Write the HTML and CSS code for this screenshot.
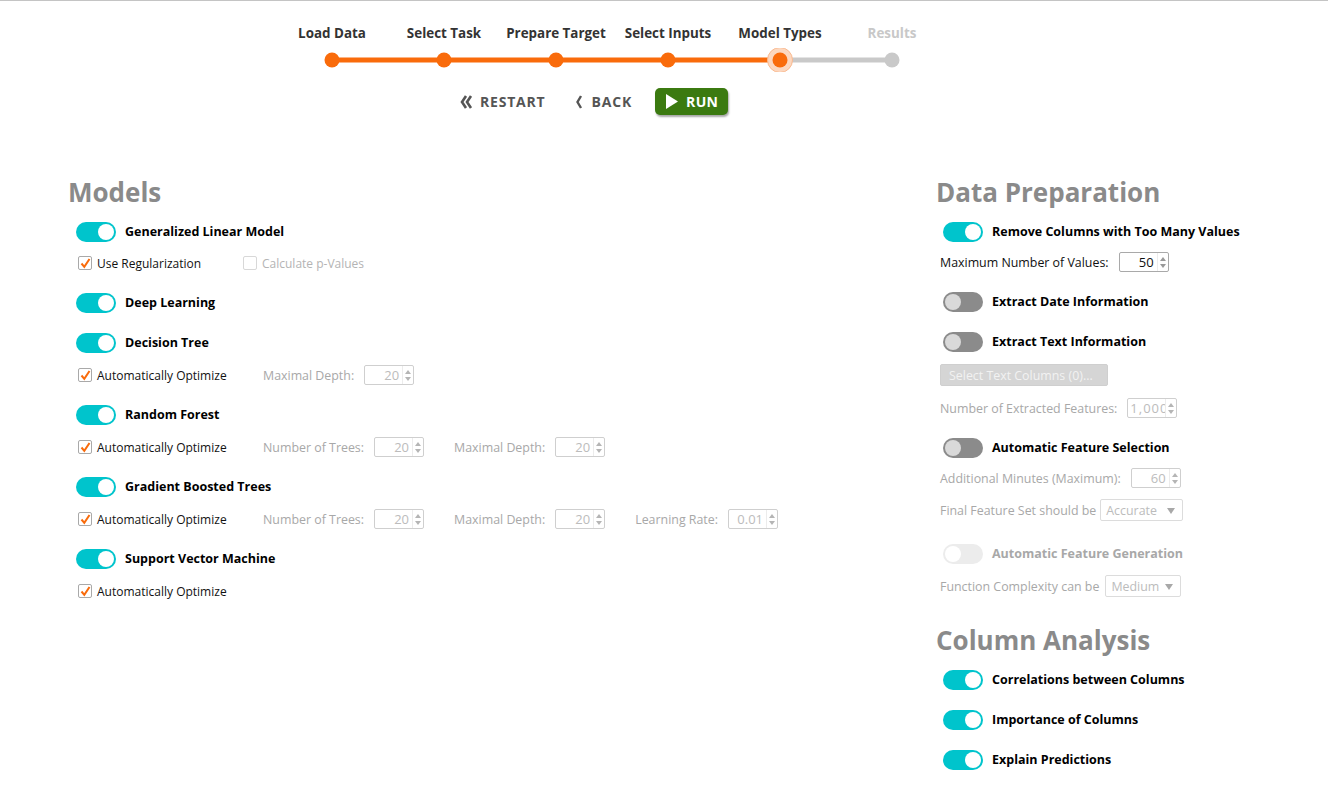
FILE: index.html
```html
<!DOCTYPE html>
<html lang="en">
<head>
<meta charset="utf-8">
<title>Model Types</title>
<link rel="stylesheet" href="styles.css">
</head>
<body>
<header class="wizard">
  <div class="steps">
    <span class="step">Load Data</span>
    <span class="step">Select Task</span>
    <span class="step">Prepare Target</span>
    <span class="step">Select Inputs</span>
    <span class="step">Model Types</span>
    <span class="step step-future">Results</span>
  </div>
  <svg class="track" width="672" height="24" viewBox="0 0 672 24">
    <line x1="504" y1="12" x2="616" y2="12" stroke="#c9c9c9" stroke-width="5"/>
    <line x1="56" y1="12" x2="504" y2="12" stroke="#f96b0b" stroke-width="5"/>
    <circle cx="56" cy="12" r="7.5" fill="#f96b0b"/>
    <circle cx="168" cy="12" r="7.5" fill="#f96b0b"/>
    <circle cx="280" cy="12" r="7.5" fill="#f96b0b"/>
    <circle cx="392" cy="12" r="7.5" fill="#f96b0b"/>
    <circle cx="504" cy="12" r="12.5" fill="#fcd7bf" stroke="#f9b98f" stroke-width="1"/>
    <circle cx="504" cy="12" r="7.5" fill="#f96b0b"/>
    <circle cx="616" cy="12" r="7.5" fill="#c9c9c9"/>
  </svg>
  <div class="actions">
    <button class="action action-restart">
      <svg width="13" height="16" viewBox="0 0 13 16"><path d="M6 2 L2 8 L6 14 M11 2 L7 8 L11 14" fill="none" stroke="#555" stroke-width="2.6" stroke-linejoin="miter"/></svg>
      RESTART
    </button>
    <button class="action action-back">
      <svg width="8" height="16" viewBox="0 0 8 16"><path d="M6 2 L2.5 8 L6 14" fill="none" stroke="#555" stroke-width="2.4"/></svg>
      BACK
    </button>
    <button class="run">
      <svg width="14" height="17" viewBox="0 0 14 17"><path d="M1 1 L13 8.5 L1 16 Z" fill="#fff"/></svg>
      RUN
    </button>
  </div>
</header>

<main class="content">
  <section class="models">
    <h2 class="section-title">Models</h2>
    <div class="model-list">
      <div class="group group-first">
        <div class="toggle-row"><span class="toggle on"></span><span class="toggle-label">Generalized Linear Model</span></div>
        <div class="options">
          <label class="check-item narrow"><span class="checkbox checked"><svg width="11" height="11" viewBox="0 0 11 11"><path d="M1.5 5.5 L4.3 8.8 L9.5 1" fill="none" stroke="#f96b0b" stroke-width="2"/></svg></span>Use Regularization</label>
          <label class="check-item disabled"><span class="checkbox"></span>Calculate p-Values</label>
        </div>
      </div>
      <div class="group">
        <div class="toggle-row"><span class="toggle on"></span><span class="toggle-label">Deep Learning</span></div>
      </div>
      <div class="group">
        <div class="toggle-row"><span class="toggle on"></span><span class="toggle-label">Decision Tree</span></div>
        <div class="options">
          <label class="check-item"><span class="checkbox checked"><svg width="11" height="11" viewBox="0 0 11 11"><path d="M1.5 5.5 L4.3 8.8 L9.5 1" fill="none" stroke="#f96b0b" stroke-width="2"/></svg></span>Automatically Optimize</label>
          <div class="field"><span class="field-label">Maximal Depth:</span><span class="spin"><span class="spin-val">20</span><span class="spin-arrows"><i class="up"></i><i class="down"></i></span></span></div>
        </div>
      </div>
      <div class="group">
        <div class="toggle-row"><span class="toggle on"></span><span class="toggle-label">Random Forest</span></div>
        <div class="options">
          <label class="check-item"><span class="checkbox checked"><svg width="11" height="11" viewBox="0 0 11 11"><path d="M1.5 5.5 L4.3 8.8 L9.5 1" fill="none" stroke="#f96b0b" stroke-width="2"/></svg></span>Automatically Optimize</label>
          <div class="field"><span class="field-label">Number of Trees:</span><span class="spin"><span class="spin-val">20</span><span class="spin-arrows"><i class="up"></i><i class="down"></i></span></span></div>
          <div class="field"><span class="field-label">Maximal Depth:</span><span class="spin"><span class="spin-val">20</span><span class="spin-arrows"><i class="up"></i><i class="down"></i></span></span></div>
        </div>
      </div>
      <div class="group">
        <div class="toggle-row"><span class="toggle on"></span><span class="toggle-label">Gradient Boosted Trees</span></div>
        <div class="options">
          <label class="check-item"><span class="checkbox checked"><svg width="11" height="11" viewBox="0 0 11 11"><path d="M1.5 5.5 L4.3 8.8 L9.5 1" fill="none" stroke="#f96b0b" stroke-width="2"/></svg></span>Automatically Optimize</label>
          <div class="field"><span class="field-label">Number of Trees:</span><span class="spin"><span class="spin-val">20</span><span class="spin-arrows"><i class="up"></i><i class="down"></i></span></span></div>
          <div class="field"><span class="field-label">Maximal Depth:</span><span class="spin"><span class="spin-val">20</span><span class="spin-arrows"><i class="up"></i><i class="down"></i></span></span></div>
          <div class="field"><span class="field-label">Learning Rate:</span><span class="spin"><span class="spin-val">0.01</span><span class="spin-arrows"><i class="up"></i><i class="down"></i></span></span></div>
        </div>
      </div>
      <div class="group">
        <div class="toggle-row"><span class="toggle on"></span><span class="toggle-label">Support Vector Machine</span></div>
        <div class="options">
          <label class="check-item"><span class="checkbox checked"><svg width="11" height="11" viewBox="0 0 11 11"><path d="M1.5 5.5 L4.3 8.8 L9.5 1" fill="none" stroke="#f96b0b" stroke-width="2"/></svg></span>Automatically Optimize</label>
        </div>
      </div>
    </div>
  </section>

  <section class="prep">
    <h2 class="section-title">Data Preparation</h2>
    <div class="toggle-row"><span class="toggle on"></span><span class="toggle-label">Remove Columns with Too Many Values</span></div>
    <div class="form-row mt10"><span class="form-label enabled">Maximum Number of Values:</span><span class="spin enabled"><span class="spin-val">50</span><span class="spin-arrows"><i class="up"></i><i class="down"></i></span></span></div>
    <div class="toggle-row mt20"><span class="toggle off"></span><span class="toggle-label">Extract Date Information</span></div>
    <div class="toggle-row mt20"><span class="toggle off"></span><span class="toggle-label">Extract Text Information</span></div>
    <button class="select-btn">Select Text Columns (0)...</button>
    <div class="form-row mt12"><span class="form-label">Number of Extracted Features:</span><span class="spin"><span class="spin-val clip">1,000</span><span class="spin-arrows"><i class="up"></i><i class="down"></i></span></span></div>
    <div class="toggle-row mt20"><span class="toggle off"></span><span class="toggle-label">Automatic Feature Selection</span></div>
    <div class="form-row mt10"><span class="form-label">Additional Minutes (Maximum):</span><span class="spin"><span class="spin-val">60</span><span class="spin-arrows"><i class="up"></i><i class="down"></i></span></span></div>
    <div class="form-row tall mt11"><span class="form-label tight">Final Feature Set should be</span><span class="select w82">Accurate<i class="caret"></i></span></div>
    <div class="toggle-row mt23"><span class="toggle disabled"></span><span class="toggle-label muted">Automatic Feature Generation</span></div>
    <div class="form-row tall mt11"><span class="form-label tight2">Function Complexity can be</span><span class="select w76">Medium<i class="caret"></i></span></div>

    <h2 class="section-title analysis">Column Analysis</h2>
    <div class="toggle-row"><span class="toggle on"></span><span class="toggle-label">Correlations between Columns</span></div>
    <div class="toggle-row mt20"><span class="toggle on"></span><span class="toggle-label">Importance of Columns</span></div>
    <div class="toggle-row mt20"><span class="toggle on"></span><span class="toggle-label">Explain Predictions</span></div>
  </section>
</main>
</body>
</html>
```

FILE: styles.css
```css
* { box-sizing: border-box; }

html, body {
  margin: 0;
  padding: 0;
  background: #fff;
}

body {
  width: 1328px;
  height: 789px;
  overflow: hidden;
  font-family: "Open Sans", "DejaVu Sans", sans-serif;
  color: #111;
}

/* ---------- wizard header ---------- */
.wizard {
  border-top: 1px solid #c4c4c4;
  height: 177px;
  padding-top: 23px;
  padding-left: 276px;
}

.steps {
  display: grid;
  grid-template-columns: repeat(6, 112px);
  height: 18px;
}

.step {
  text-align: center;
  font-size: 13.4px;
  font-weight: 700;
  line-height: 18px;
  color: #333;
}

.step-future { color: #c8c8c8; }

.track {
  display: block;
  margin-top: 6px;
}

.actions {
  display: flex;
  align-items: center;
  height: 27px;
  margin-top: 16px;
  padding-left: 184px;
}

.action {
  display: flex;
  align-items: center;
  gap: 7px;
  border: 0;
  background: none;
  padding: 0;
  font-family: "Open Sans", sans-serif;
  font-size: 14px;
  font-weight: 700;
  color: #555;
  letter-spacing: 0.8px;
}

.action-restart { margin-right: 29px; }
.action-back { margin-right: 23px; gap: 9px; }

.run {
  display: flex;
  align-items: center;
  gap: 7px;
  height: 27px;
  width: 73px;
  padding: 0 0 0 10px;
  border: 0;
  border-radius: 5px;
  background: #3b7a10;
  box-shadow: 1px 2px 2px rgba(0, 0, 0, 0.35);
  font-family: "Open Sans", sans-serif;
  font-size: 14px;
  font-weight: 700;
  color: #fff;
  letter-spacing: 0.4px;
}

/* ---------- content ---------- */
.content {
  display: flex;
  padding-left: 68px;
}

.models { width: 868px; }
.prep { flex: 1; }

.section-title {
  margin: 0 0 15px;
  font-size: 26px;
  line-height: 30px;
  font-weight: 700;
  color: #8a8a8a;
}

.section-title.analysis { margin-top: 28px; }

.model-list {
  display: flex;
  flex-direction: column;
  gap: 20px;
  padding-left: 8px;
}

.group {
  display: flex;
  flex-direction: column;
  gap: 12px;
}

.group-first { gap: 11px; }

.toggle-row {
  display: flex;
  align-items: center;
  height: 20px;
  gap: 9px;
}

.prep .toggle-row { padding-left: 7px; }

.toggle-label {
  font-size: 12.5px;
  font-weight: 700;
  color: #000;
  margin-top: -1px;
}

.toggle-label.muted { color: #a8a8a8; }

.toggle {
  position: relative;
  width: 40px;
  height: 20px;
  border-radius: 10px;
  flex: none;
}

.toggle::after {
  content: "";
  position: absolute;
  top: 2px;
  width: 16px;
  height: 16px;
  border-radius: 50%;
}

.toggle.on { background: #00c4cc; }
.toggle.on::after { right: 2px; background: #fff; }

.toggle.off { background: #8b8b8b; }
.toggle.off::after { left: 2px; background: #d9d9d9; }

.toggle.disabled { background: #ececec; }
.toggle.disabled::after { left: 2px; background: #fff; }

/* options row */
.options {
  display: flex;
  align-items: center;
  height: 20px;
  padding-left: 2px;
}

.check-item {
  display: flex;
  align-items: center;
  gap: 5px;
  width: 185px;
  font-size: 12px;
  color: #111;
}

.check-item.narrow { width: 165px; }
.check-item.disabled { color: #b4b4b4; }

.checkbox {
  display: flex;
  align-items: center;
  justify-content: center;
  width: 14px;
  height: 14px;
  border: 1px solid #a9a9a9;
  border-radius: 2px;
  background: #fff;
  flex: none;
}

.check-item.disabled .checkbox { border-color: #d8d8d8; }

.field {
  display: flex;
  align-items: center;
  gap: 10px;
  margin-right: 30px;
}

.field-label,
.form-label {
  font-size: 12.4px;
  color: #a8a8a8;
}

.form-label.enabled { color: #111; }

/* spinner */
.spin {
  display: flex;
  width: 50px;
  height: 20px;
  border: 1px solid #cfcfcf;
  border-radius: 2px;
  background: #fff;
  flex: none;
}

.spin.enabled { border-color: #a9a9a9; }

.spin-val {
  flex: 1;
  overflow: hidden;
  white-space: nowrap;
  text-align: right;
  padding-right: 3px;
  font-size: 13px;
  line-height: 18px;
  color: #bcbcbc;
}

.spin.enabled .spin-val { color: #111; }

.spin-val.clip {
  text-align: left;
  padding-left: 2px;
  padding-right: 0;
  letter-spacing: 1px;
}

.spin-arrows {
  display: flex;
  flex-direction: column;
  align-items: center;
  justify-content: center;
  gap: 3px;
  width: 11px;
  border-left: 1px solid #ececec;
  flex: none;
}

.spin-arrows i {
  display: block;
  width: 0;
  height: 0;
  border-left: 3px solid transparent;
  border-right: 3px solid transparent;
}

.spin-arrows .up { border-bottom: 4px solid #b5b5b5; }
.spin-arrows .down { border-top: 4px solid #b5b5b5; }

.spin.enabled .spin-arrows .up { border-bottom-color: #999; }
.spin.enabled .spin-arrows .down { border-top-color: #999; }

/* right column rows */
.form-row {
  display: flex;
  align-items: center;
  height: 20px;
  gap: 10px;
  padding-left: 4px;
}

.form-row.tall { height: 22px; }
.form-row .tight { margin-right: -6px; }
.form-row .tight2 { margin-right: -4px; }

.select {
  position: relative;
  display: flex;
  align-items: center;
  height: 22px;
  padding-left: 5px;
  border: 1px solid #dcdcdc;
  border-radius: 2px;
  font-size: 12.4px;
  color: #bcbcbc;
  background: #fff;
}

.select.w82 { width: 83px; }
.select.w76 { width: 76px; }

.caret {
  position: absolute;
  right: 7px;
  top: 8px;
  width: 0;
  height: 0;
  border-left: 4px solid transparent;
  border-right: 4px solid transparent;
  border-top: 6px solid #a8a8a8;
}

.select-btn {
  display: block;
  margin: 12px 0 0 4px;
  width: 168px;
  height: 22px;
  padding: 0 0 0 8px;
  border: 1px solid #cfcfcf;
  border-radius: 2px;
  background: #d5d5d5;
  text-align: left;
  font-family: "Open Sans", sans-serif;
  font-size: 12.4px;
  color: #f2f2f2;
}

.mt10 { margin-top: 10px; }
.mt11 { margin-top: 11px; }
.mt12 { margin-top: 12px; }
.mt20 { margin-top: 20px; }
.mt23 { margin-top: 23px; }
```
